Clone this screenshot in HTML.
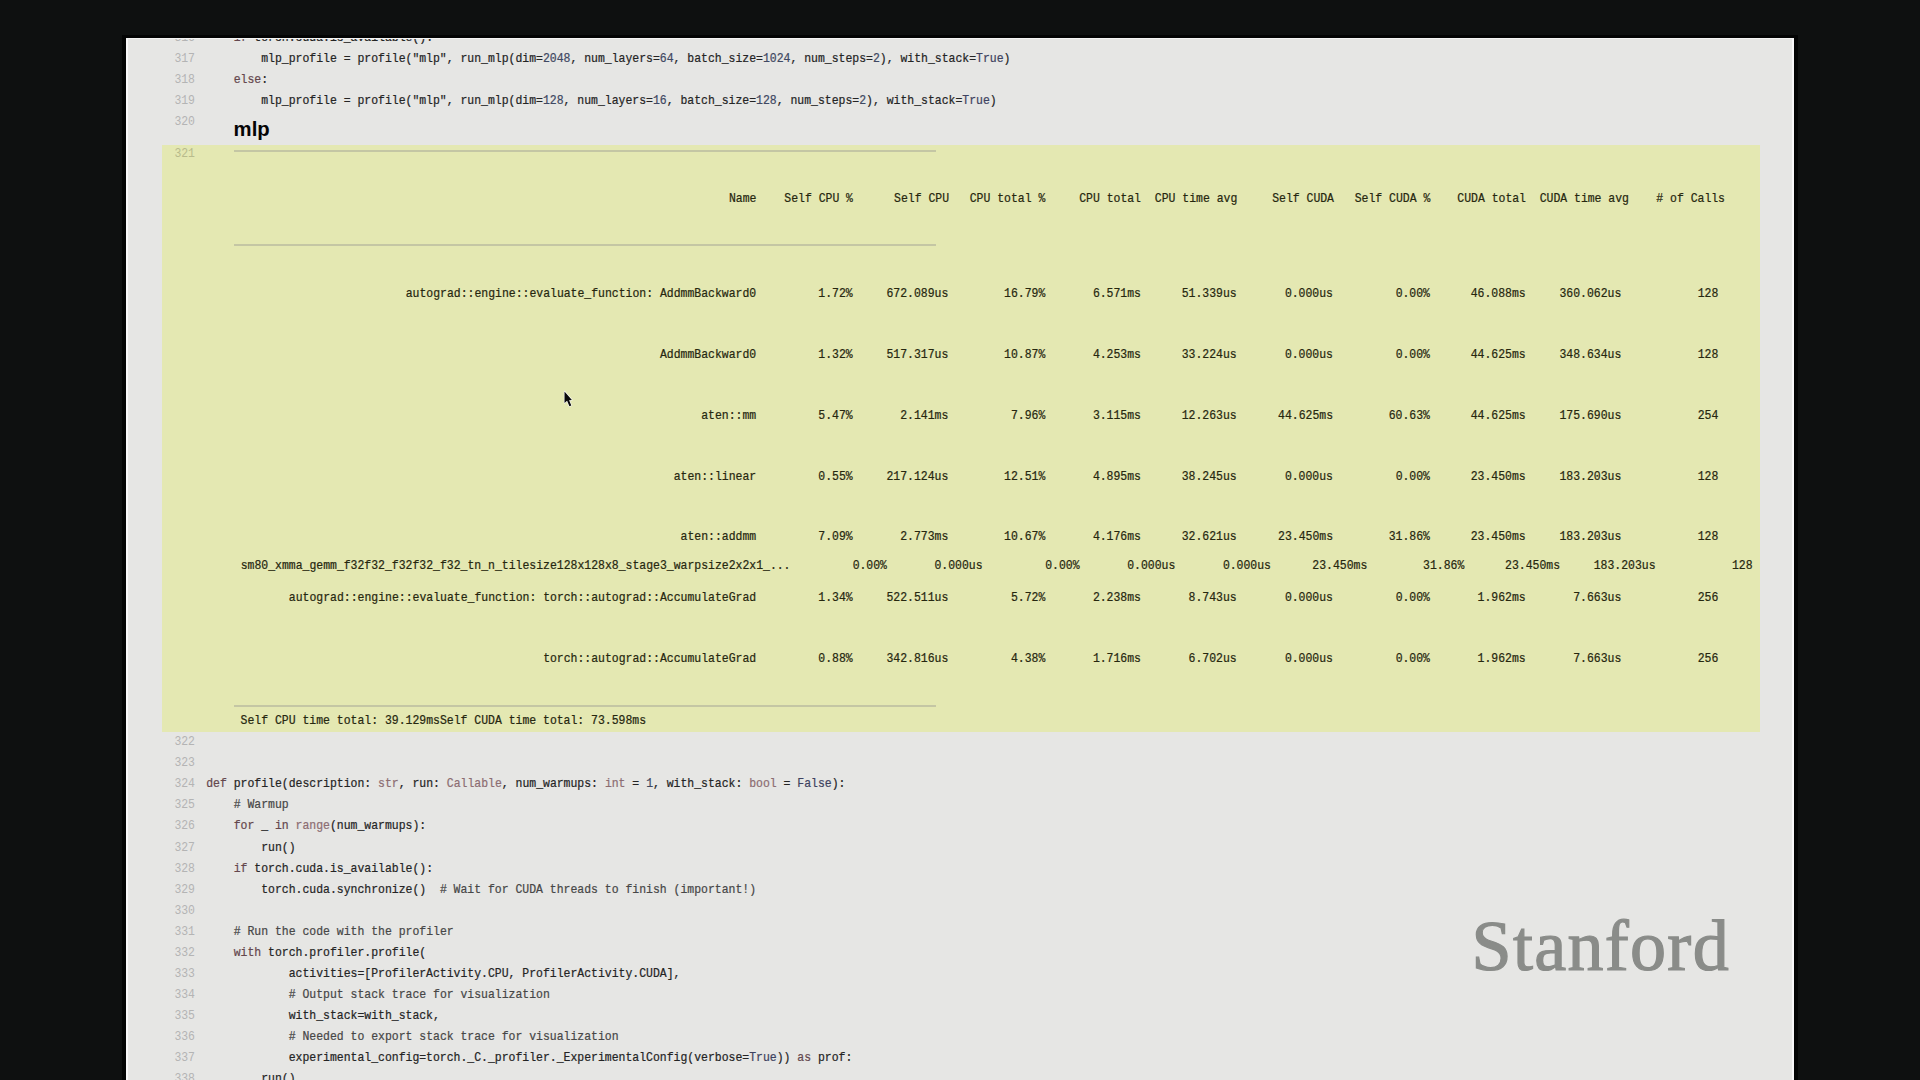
<!DOCTYPE html>
<html><head><meta charset="utf-8"><style>
html,body{margin:0;padding:0;}
body{width:1920px;height:1080px;background:#0e1010;position:relative;overflow:hidden;font-family:"Liberation Mono",monospace;}
#wrap{position:absolute;left:0;top:0;width:1920px;height:1080px;}
#shadow{position:absolute;left:122px;top:35px;width:1676px;height:1045px;background:#030404;}
#panel{position:absolute;left:126px;top:38px;width:1668px;height:1042px;background:#e6e6e4;}
#edgeL{position:absolute;left:126px;top:38px;width:2px;height:1042px;background:#f8f8f8;}
#edgeR{position:absolute;left:1792px;top:38px;width:2px;height:1042px;background:#f8f8f8;}
#edgeT{position:absolute;left:126px;top:38px;width:1668px;height:1px;background:#f4f4f4;}
#topbar{position:absolute;left:0;top:0;width:1920px;height:35px;background:#0e1010;}
#topbar2{position:absolute;left:122px;top:35px;width:1676px;height:3px;background:#030404;}
#hl{position:absolute;left:162px;top:145px;width:1598px;height:587px;background:#e4e8b2;}
.rule{position:absolute;left:234px;width:702px;height:2px;background:#c4c6a4;}
.ln,.cd,.t{position:absolute;font-size:11.46px;line-height:0;white-space:pre;transform:scaleY(1.1);transform-origin:0 3.05px;-webkit-text-stroke:0.2px currentColor;}
.ln{right:1725.0px;color:#b4b4b4;-webkit-text-stroke:0;}
.ln.y{color:#b8bb8c;}
.cd{left:206.2px;color:#242424;}
.t{color:#26270f;}
.k{color:#64474d;}
.b{color:#8c6d72;}
.c{color:#3e4260;}
.n{color:#3e4862;}
.cm{color:#474747;}
#mlp{position:absolute;left:233.6px;top:128.9px;line-height:0;font-family:"Liberation Sans",sans-serif;font-weight:bold;font-size:20.3px;color:#050505;}
#foot{position:absolute;left:240.6px;top:721.1px;}
#stan{position:absolute;left:1471.6px;top:945.5px;line-height:0;font-family:"Liberation Serif",serif;font-size:72px;letter-spacing:1.3px;color:#8a8c89;-webkit-text-stroke:1.2px #8a8c89;}
</style></head><body><div id="wrap">
<div id="shadow"></div><div id="panel"></div><div id="edgeL"></div><div id="edgeR"></div>
<div id="hl"></div>
<div class="rule" style="top:149.6px"></div>
<div class="rule" style="top:244px"></div>
<div class="rule" style="top:704.5px"></div>
<div id="mlp">mlp</div>
<div class="t" id="foot">Self CPU time total: 39.129msSelf CUDA time total: 73.598ms</div>
<div id="stan">Stanford</div>
<div class="ln" style="top:38.13px">316</div>
<div class="cd" style="top:38.13px">    <span class="k">if</span> torch.cuda.is_available():</div>
<div class="ln" style="top:59.20px">317</div>
<div class="cd" style="top:59.20px">        mlp_profile = profile("mlp", run_mlp(dim=<span class="n">2048</span>, num_layers=<span class="n">64</span>, batch_size=<span class="n">1024</span>, num_steps=<span class="n">2</span>), with_stack=<span class="c">True</span>)</div>
<div class="ln" style="top:80.27px">318</div>
<div class="cd" style="top:80.27px">    <span class="k">else</span>:</div>
<div class="ln" style="top:101.34px">319</div>
<div class="cd" style="top:101.34px">        mlp_profile = profile("mlp", run_mlp(dim=<span class="n">128</span>, num_layers=<span class="n">16</span>, batch_size=<span class="n">128</span>, num_steps=<span class="n">2</span>), with_stack=<span class="c">True</span>)</div>
<div class="ln" style="top:122.41px">320</div>
<div class="ln y" style="top:153.6px">321</div>
<div class="ln" style="top:742.20px">322</div>
<div class="ln" style="top:763.27px">323</div>
<div class="ln" style="top:784.34px">324</div>
<div class="cd" style="top:784.34px"><span class="k">def</span> profile(description: <span class="b">str</span>, run: <span class="b">Callable</span>, num_warmups: <span class="b">int</span> = <span class="n">1</span>, with_stack: <span class="b">bool</span> = <span class="c">False</span>):</div>
<div class="ln" style="top:805.41px">325</div>
<div class="cd" style="top:805.41px">    <span class="cm"># Warmup</span></div>
<div class="ln" style="top:826.48px">326</div>
<div class="cd" style="top:826.48px">    <span class="k">for</span> _ <span class="k">in</span> <span class="b">range</span>(num_warmups):</div>
<div class="ln" style="top:847.55px">327</div>
<div class="cd" style="top:847.55px">        run()</div>
<div class="ln" style="top:868.62px">328</div>
<div class="cd" style="top:868.62px">    <span class="k">if</span> torch.cuda.is_available():</div>
<div class="ln" style="top:889.69px">329</div>
<div class="cd" style="top:889.69px">        torch.cuda.synchronize()  <span class="cm"># Wait for CUDA threads to finish (important!)</span></div>
<div class="ln" style="top:910.76px">330</div>
<div class="ln" style="top:931.83px">331</div>
<div class="cd" style="top:931.83px">    <span class="cm"># Run the code with the profiler</span></div>
<div class="ln" style="top:952.90px">332</div>
<div class="cd" style="top:952.90px">    <span class="k">with</span> torch.profiler.profile(</div>
<div class="ln" style="top:973.97px">333</div>
<div class="cd" style="top:973.97px">            activities=[ProfilerActivity.CPU, ProfilerActivity.CUDA],</div>
<div class="ln" style="top:995.04px">334</div>
<div class="cd" style="top:995.04px">            <span class="cm"># Output stack trace for visualization</span></div>
<div class="ln" style="top:1016.11px">335</div>
<div class="cd" style="top:1016.11px">            with_stack=with_stack,</div>
<div class="ln" style="top:1037.18px">336</div>
<div class="cd" style="top:1037.18px">            <span class="cm"># Needed to export stack trace for visualization</span></div>
<div class="ln" style="top:1058.25px">337</div>
<div class="cd" style="top:1058.25px">            experimental_config=torch._C._profiler._ExperimentalConfig(verbose=<span class="c">True</span>)) <span class="k">as</span> prof:</div>
<div class="ln" style="top:1079.32px">338</div>
<div class="cd" style="top:1079.32px">        run()</div>
<div class="t" style="top:198.80px;right:1163.50px">Name</div>
<div class="t" style="top:198.80px;right:1067.00px">Self CPU %</div>
<div class="t" style="top:198.80px;right:971.00px">Self CPU</div>
<div class="t" style="top:198.80px;right:874.70px">CPU total %</div>
<div class="t" style="top:198.80px;right:779.00px">CPU total</div>
<div class="t" style="top:198.80px;right:682.70px">CPU time avg</div>
<div class="t" style="top:198.80px;right:586.00px">Self CUDA</div>
<div class="t" style="top:198.80px;right:489.70px">Self CUDA %</div>
<div class="t" style="top:198.80px;right:394.00px">CUDA total</div>
<div class="t" style="top:198.80px;right:291.00px">CUDA time avg</div>
<div class="t" style="top:198.80px;right:195.00px"># of Calls</div>
<div class="t" style="top:293.60px;right:1163.80px">autograd::engine::evaluate_function: AddmmBackward0</div>
<div class="t" style="top:293.60px;right:1067.30px">1.72%</div>
<div class="t" style="top:293.60px;right:971.70px">672.089us</div>
<div class="t" style="top:293.60px;right:874.70px">16.79%</div>
<div class="t" style="top:293.60px;right:779.00px">6.571ms</div>
<div class="t" style="top:293.60px;right:683.30px">51.339us</div>
<div class="t" style="top:293.60px;right:587.00px">0.000us</div>
<div class="t" style="top:293.60px;right:490.00px">0.00%</div>
<div class="t" style="top:293.60px;right:394.30px">46.088ms</div>
<div class="t" style="top:293.60px;right:298.70px">360.062us</div>
<div class="t" style="top:293.60px;right:201.70px">128</div>
<div class="t" style="top:354.70px;right:1163.80px">AddmmBackward0</div>
<div class="t" style="top:354.70px;right:1067.30px">1.32%</div>
<div class="t" style="top:354.70px;right:971.70px">517.317us</div>
<div class="t" style="top:354.70px;right:874.70px">10.87%</div>
<div class="t" style="top:354.70px;right:779.00px">4.253ms</div>
<div class="t" style="top:354.70px;right:683.30px">33.224us</div>
<div class="t" style="top:354.70px;right:587.00px">0.000us</div>
<div class="t" style="top:354.70px;right:490.00px">0.00%</div>
<div class="t" style="top:354.70px;right:394.30px">44.625ms</div>
<div class="t" style="top:354.70px;right:298.70px">348.634us</div>
<div class="t" style="top:354.70px;right:201.70px">128</div>
<div class="t" style="top:415.60px;right:1163.80px">aten::mm</div>
<div class="t" style="top:415.60px;right:1067.30px">5.47%</div>
<div class="t" style="top:415.60px;right:971.70px">2.141ms</div>
<div class="t" style="top:415.60px;right:874.70px">7.96%</div>
<div class="t" style="top:415.60px;right:779.00px">3.115ms</div>
<div class="t" style="top:415.60px;right:683.30px">12.263us</div>
<div class="t" style="top:415.60px;right:587.00px">44.625ms</div>
<div class="t" style="top:415.60px;right:490.00px">60.63%</div>
<div class="t" style="top:415.60px;right:394.30px">44.625ms</div>
<div class="t" style="top:415.60px;right:298.70px">175.690us</div>
<div class="t" style="top:415.60px;right:201.70px">254</div>
<div class="t" style="top:476.60px;right:1163.80px">aten::linear</div>
<div class="t" style="top:476.60px;right:1067.30px">0.55%</div>
<div class="t" style="top:476.60px;right:971.70px">217.124us</div>
<div class="t" style="top:476.60px;right:874.70px">12.51%</div>
<div class="t" style="top:476.60px;right:779.00px">4.895ms</div>
<div class="t" style="top:476.60px;right:683.30px">38.245us</div>
<div class="t" style="top:476.60px;right:587.00px">0.000us</div>
<div class="t" style="top:476.60px;right:490.00px">0.00%</div>
<div class="t" style="top:476.60px;right:394.30px">23.450ms</div>
<div class="t" style="top:476.60px;right:298.70px">183.203us</div>
<div class="t" style="top:476.60px;right:201.70px">128</div>
<div class="t" style="top:537.00px;right:1163.80px">aten::addmm</div>
<div class="t" style="top:537.00px;right:1067.30px">7.09%</div>
<div class="t" style="top:537.00px;right:971.70px">2.773ms</div>
<div class="t" style="top:537.00px;right:874.70px">10.67%</div>
<div class="t" style="top:537.00px;right:779.00px">4.176ms</div>
<div class="t" style="top:537.00px;right:683.30px">32.621us</div>
<div class="t" style="top:537.00px;right:587.00px">23.450ms</div>
<div class="t" style="top:537.00px;right:490.00px">31.86%</div>
<div class="t" style="top:537.00px;right:394.30px">23.450ms</div>
<div class="t" style="top:537.00px;right:298.70px">183.203us</div>
<div class="t" style="top:537.00px;right:201.70px">128</div>
<div class="t" style="top:565.80px;right:1129.50px">sm80_xmma_gemm_f32f32_f32f32_f32_tn_n_tilesize128x128x8_stage3_warpsize2x2x1_...</div>
<div class="t" style="top:565.80px;right:1033.00px">0.00%</div>
<div class="t" style="top:565.80px;right:937.40px">0.000us</div>
<div class="t" style="top:565.80px;right:840.40px">0.00%</div>
<div class="t" style="top:565.80px;right:744.70px">0.000us</div>
<div class="t" style="top:565.80px;right:649.00px">0.000us</div>
<div class="t" style="top:565.80px;right:552.70px">23.450ms</div>
<div class="t" style="top:565.80px;right:455.70px">31.86%</div>
<div class="t" style="top:565.80px;right:360.00px">23.450ms</div>
<div class="t" style="top:565.80px;right:264.40px">183.203us</div>
<div class="t" style="top:565.80px;right:167.40px">128</div>
<div class="t" style="top:597.80px;right:1163.80px">autograd::engine::evaluate_function: torch::autograd::AccumulateGrad</div>
<div class="t" style="top:597.80px;right:1067.30px">1.34%</div>
<div class="t" style="top:597.80px;right:971.70px">522.511us</div>
<div class="t" style="top:597.80px;right:874.70px">5.72%</div>
<div class="t" style="top:597.80px;right:779.00px">2.238ms</div>
<div class="t" style="top:597.80px;right:683.30px">8.743us</div>
<div class="t" style="top:597.80px;right:587.00px">0.000us</div>
<div class="t" style="top:597.80px;right:490.00px">0.00%</div>
<div class="t" style="top:597.80px;right:394.30px">1.962ms</div>
<div class="t" style="top:597.80px;right:298.70px">7.663us</div>
<div class="t" style="top:597.80px;right:201.70px">256</div>
<div class="t" style="top:658.80px;right:1163.80px">torch::autograd::AccumulateGrad</div>
<div class="t" style="top:658.80px;right:1067.30px">0.88%</div>
<div class="t" style="top:658.80px;right:971.70px">342.816us</div>
<div class="t" style="top:658.80px;right:874.70px">4.38%</div>
<div class="t" style="top:658.80px;right:779.00px">1.716ms</div>
<div class="t" style="top:658.80px;right:683.30px">6.702us</div>
<div class="t" style="top:658.80px;right:587.00px">0.000us</div>
<div class="t" style="top:658.80px;right:490.00px">0.00%</div>
<div class="t" style="top:658.80px;right:394.30px">1.962ms</div>
<div class="t" style="top:658.80px;right:298.70px">7.663us</div>
<div class="t" style="top:658.80px;right:201.70px">256</div>
<svg id="cur" width="14" height="20" viewBox="-1.5 -1.5 14 20" style="position:absolute;left:563.2px;top:390px;"><path d="M0,0 L0,11.4 L2.6,9.2 L4.9,14.8 L6.8,14 L4.6,8.7 L7.4,8.5 Z" fill="#0a0a0a" stroke="#ffffff" stroke-width="1.2" stroke-linejoin="round" paint-order="stroke"/></svg>
<div id="topbar"></div><div id="topbar2"></div><div id="edgeT"></div>
</div></body></html>
